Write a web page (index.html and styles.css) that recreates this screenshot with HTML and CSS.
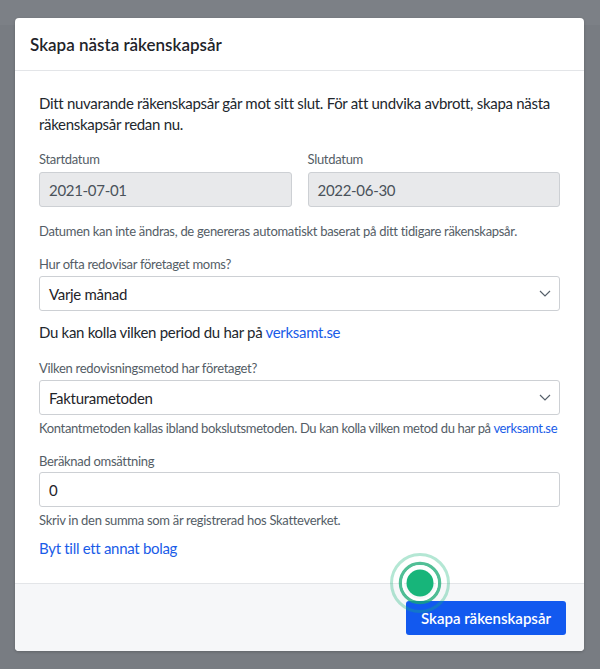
FILE: index.html
```html
<!DOCTYPE html>
<html lang="sv">
<head>
<meta charset="utf-8">
<title>Skapa nästa räkenskapsår</title>
<link rel="stylesheet" href="styles.css">
</head>
<body>
<div class="page-bar"></div>
<div class="modal">
  <div class="modal-header">
    <h1 class="modal-title">Skapa nästa räkenskapsår</h1>
  </div>
  <div class="modal-body">
    <p class="intro">Ditt nuvarande räkenskapsår går mot sitt slut. För att undvika avbrott, skapa nästa räkenskapsår redan nu.</p>

    <div class="date-row">
      <div class="field">
        <label class="field-label">Startdatum</label>
        <div class="input disabled">2021-07-01</div>
      </div>
      <div class="field">
        <label class="field-label">Slutdatum</label>
        <div class="input disabled">2022-06-30</div>
      </div>
    </div>
    <p class="help help-dates">Datumen kan inte ändras, de genereras automatiskt baserat på ditt tidigare räkenskapsår.</p>

    <label class="field-label label-moms">Hur ofta redovisar företaget moms?</label>
    <div class="input select">
      <span>Varje månad</span>
      <svg class="chevron" width="12" height="7" viewBox="0 0 12 7"><path d="M1 1l5 5 5-5" fill="none" stroke="#56606a" stroke-width="1.2"/></svg>
    </div>
    <p class="note">Du kan kolla vilken period du har på <a href="#">verksamt.se</a></p>

    <label class="field-label label-metod">Vilken redovisningsmetod har företaget?</label>
    <div class="input select">
      <span>Fakturametoden</span>
      <svg class="chevron" width="12" height="7" viewBox="0 0 12 7"><path d="M1 1l5 5 5-5" fill="none" stroke="#56606a" stroke-width="1.2"/></svg>
    </div>
    <p class="help help-metod">Kontantmetoden kallas ibland bokslutsmetoden. Du kan kolla vilken metod du har på <a href="#">verksamt.se</a></p>

    <label class="field-label label-oms">Beräknad omsättning</label>
    <div class="input">0</div>
    <p class="help help-oms">Skriv in den summa som är registrerad hos Skatteverket.</p>

    <a class="switch-link" href="#">Byt till ett annat bolag</a>
  </div>
  <div class="modal-footer">
    <button class="btn-primary">Skapa räkenskapsår</button>
  </div>

  <svg class="pulse" width="64" height="64" viewBox="0 0 64 64">
    <circle cx="32" cy="32" r="28.5" fill="none" stroke="rgba(23,181,122,0.32)" stroke-width="3"/>
    <circle cx="32" cy="32" r="19.5" fill="none" stroke="rgba(23,170,115,0.75)" stroke-width="3.5"/>
    <circle cx="32" cy="32" r="17" fill="none" stroke="#fff" stroke-width="2"/>
    <circle cx="32" cy="32" r="13.5" fill="#17b57a"/>
  </svg>
</div>
</body>
</html>
```

FILE: styles.css
```css
* {
  box-sizing: border-box;
}
body {
  margin: 0;
  height: 669px;
  overflow: hidden;
  background: #787c82;
  font-family: "Lato", "Open Sans", sans-serif;
  color: #22272d;
  position: relative;
}
.page-bar {
  height: 25px;
  background: #7c8086;
  position: absolute;
  top: 0;
  left: 0;
  right: 0;
}
.modal {
  position: relative;
  margin: 18px 16px 0 15px;
  width: 569px;
  background: #fff;
  border-radius: 4px;
  box-shadow: 0 1px 3px rgba(0, 0, 0, 0.2);
}
.modal-header {
  height: 53px;
  padding: 0 15px;
  display: flex;
  align-items: center;
  border-bottom: 1px solid #e3e5e8;
}
.modal-title {
  margin: 0;
  font-size: 17px;
  font-weight: 600;
  color: #1f242a;
}
.modal-body {
  padding: 22px 24px 24px 24px;
  display: flex;
  flex-direction: column;
  align-items: stretch;
  letter-spacing: -0.3px;
}
.intro {
  margin: 0;
  font-size: 15px;
  line-height: 21px;
}
.date-row {
  margin-top: 15px;
  display: flex;
  gap: 16px;
}
.field {
  flex: 1;
  display: flex;
  flex-direction: column;
}
.field-label {
  display: block;
  font-size: 13px;
  line-height: 18px;
  color: #545d66;
  margin-bottom: 4px;
}
.input {
  height: 35px;
  border: 1px solid #cdd0d4;
  border-radius: 3px;
  padding: 0 9px;
  display: flex;
  align-items: center;
  font-size: 15px;
  color: #1f242a;
  background: #fff;
}
.input.disabled {
  background: #e8e9eb;
  color: #4a525a;
}
.select {
  justify-content: space-between;
  padding-right: 8px;
}
.help {
  margin: 0;
  font-size: 13px;
  line-height: 18px;
  color: #545d66;
}
.help-dates {
  margin-top: 15px;
}
.label-moms {
  margin-top: 15px;
  margin-bottom: 3px;
}
.note {
  margin: 11px 0 0;
  font-size: 15px;
  line-height: 21px;
}
.label-metod {
  margin-top: 16px;
  margin-bottom: 3px;
}
.help-metod {
  margin-top: 4px;
  white-space: nowrap;
  letter-spacing: -0.35px;
}
.label-oms {
  margin-top: 15px;
  margin-bottom: 2px;
}
.help-oms {
  margin-top: 4px;
}
a {
  color: #1a5ce8;
  text-decoration: none;
}
.switch-link {
  margin-top: 9px;
  font-size: 15px;
  line-height: 21px;
  align-self: flex-start;
}
.modal-footer {
  border-top: 1px solid #e3e5e8;
  background: #f6f7f9;
  border-radius: 0 0 4px 4px;
  padding: 17px 18px 16px;
  display: flex;
  justify-content: flex-end;
}
.btn-primary {
  width: 160px;
  height: 34px;
  border: 0;
  border-radius: 3px;
  background: #1259ef;
  color: #fff;
  font-family: inherit;
  font-size: 15px;
  font-weight: 600;
}
.pulse {
  position: absolute;
  left: 373px;
  top: 533px;
}
```
